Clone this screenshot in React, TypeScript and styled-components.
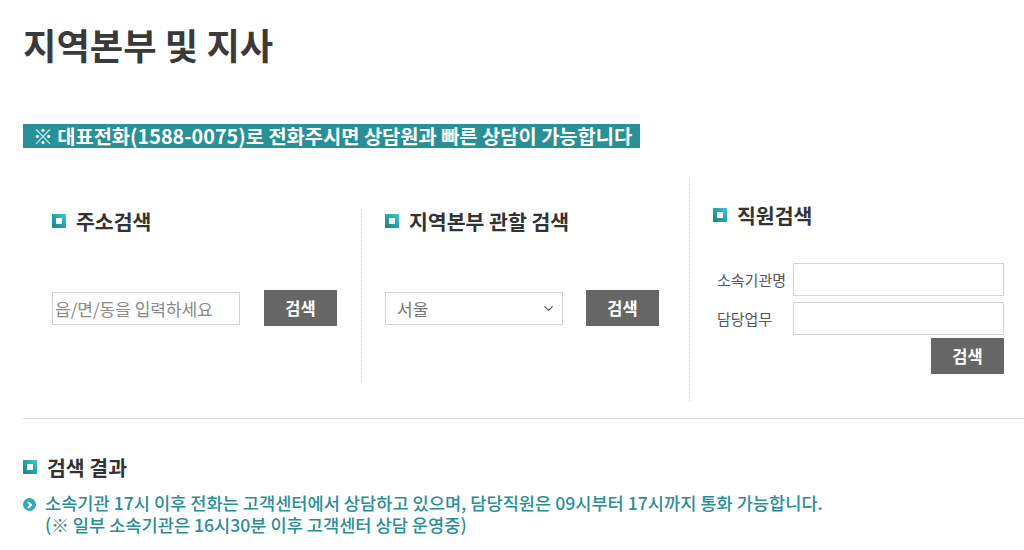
import React from "react";
import styled, { createGlobalStyle } from "styled-components";
import { ChevronDown } from "lucide-react";

const GlobalStyle = createGlobalStyle`
  html, body { margin: 0; padding: 0; background: #fff; }
  body { font-family: "Noto Sans CJK KR", "Noto Sans", sans-serif; color: #333; }
  * { box-sizing: border-box; }
`;

const Page = styled.div`
  padding-left: 23px;
  width: 1024px;
  height: 550px;
  overflow: hidden;
`;

const Title = styled.h1`
  margin: 21px 0 0 0;
  font-size: 36.3px;
  line-height: 46px;
  font-weight: 700;
  color: #3a3a3a;
`;

const Banner = styled.div`
  display: inline-block;
  margin-top: 57px;
  height: 24px;
  line-height: 24px;
  padding: 0 8px 0 10px;
  background: #2a9097;
  color: #fff;
  font-size: 19.8px;
  font-weight: 700;
  white-space: nowrap;
`;

const Columns = styled.div`
  display: grid;
  grid-template-columns: 339px 328px 1fr;
  align-items: start;
  margin-top: 30px;
`;

const Column = styled.div<{ $top: number; $height?: number; $padLeft: number; $divider?: boolean }>`
  margin-top: ${(p) => p.$top}px;
  ${(p) => (p.$height ? `height: ${p.$height}px;` : "")}
  padding-left: ${(p) => p.$padLeft}px;
  border-right: ${(p) => (p.$divider ? "1px dotted #cfcfcf" : "none")};
`;

const Heading = styled.div<{ $pt?: number }>`
  display: flex;
  align-items: center;
  gap: 10px;
  padding-top: ${(p) => p.$pt ?? 0}px;
  height: ${(p) => 24 + (p.$pt ?? 0)}px;
  font-size: 20.5px;
  font-weight: 700;
  color: #333;
  white-space: nowrap;
`;

const SquareIcon = styled.span`
  position: relative;
  flex: none;
  width: 14px;
  height: 14px;
  background: linear-gradient(45deg, #1b8189 0%, #29a6ae 55%, #47c8cf 100%);
  &::after {
    content: "";
    position: absolute;
    left: 4px;
    top: 4px;
    width: 6px;
    height: 6px;
    background: #fff;
  }
`;

const SearchRow = styled.div<{ $mt: number }>`
  display: flex;
  align-items: center;
  margin-top: ${(p) => p.$mt}px;
`;

const TextInput = styled.input<{ $w: number }>`
  width: ${(p) => p.$w}px;
  height: 33px;
  border: 1px solid #d4d4d4;
  padding: 0 2px;
  font-family: inherit;
  font-size: 17px;
  color: #555;
  outline: none;
  &::placeholder { color: #8a8a8a; }
`;

const SelectWrap = styled.div`
  position: relative;
  width: 178px;
  height: 33px;
`;

const Select = styled.select`
  appearance: none;
  width: 100%;
  height: 100%;
  border: 1px solid #d4d4d4;
  background: #fff;
  padding: 0 11px;
  font-family: inherit;
  font-size: 17px;
  color: #777;
  outline: none;
`;

const SelectArrow = styled.span`
  position: absolute;
  right: 7px;
  top: 9px;
  color: #555;
  pointer-events: none;
  display: flex;
`;

const Button = styled.button<{ $ml?: number }>`
  margin-left: ${(p) => p.$ml ?? 0}px;
  width: 73px;
  height: 36px;
  border: none;
  background: #666;
  color: #fff;
  font-family: inherit;
  font-size: 16.5px;
  font-weight: 700;
  cursor: pointer;
`;

const FormGrid = styled.div`
  display: grid;
  grid-template-columns: 76px 211px;
  row-gap: 6px;
  align-items: center;
  margin-top: 36px;
  padding-left: 4px;
`;

const Label = styled.label`
  font-size: 15px;
  color: #555;
  white-space: nowrap;
`;

const RightButtonRow = styled.div`
  display: flex;
  justify-content: flex-end;
  width: 291px;
  margin-top: 3px;
`;

const Rule = styled.hr`
  margin: 0;
  border: none;
  border-top: 1px solid #dcdcdc;
  margin-top: 17px;
`;

const ResultSection = styled.section`
  padding-top: 36px;
`;

const Notice = styled.div`
  display: flex;
  align-items: flex-start;
  gap: 9px;
  margin-top: 13px;
  color: #2a8e97;
  font-size: 17.6px;
  font-weight: 500;
  white-space: nowrap;
`;

const NoticeLine = styled.div`
  height: 22px;
  line-height: 22px;
`;

const Bullet = styled.span`
  flex: none;
  width: 13px;
  height: 13px;
  margin-top: 6px;
  border-radius: 50%;
  background: #31aab8;
  display: flex;
  align-items: center;
  justify-content: center;
`;

export default function App() {
  return (
    <>
      <GlobalStyle />
      <Page>
        <Title>지역본부 및 지사</Title>
        <Banner>※ 대표전화(1588-0075)로 전화주시면 상담원과 빠른 상담이 가능합니다</Banner>
        <Columns>
          <Column $top={30} $height={174} $padLeft={29} $divider>
            <Heading>
              <SquareIcon />
              주소검색
            </Heading>
            <SearchRow $mt={57}>
              <TextInput $w={188} placeholder="읍/면/동을 입력하세요" />
              <Button $ml={24}>검색</Button>
            </SearchRow>
          </Column>
          <Column $top={0} $height={222} $padLeft={23} $divider>
            <Heading $pt={30}>
              <SquareIcon />
              지역본부 관할 검색
            </Heading>
            <SearchRow $mt={57}>
              <SelectWrap>
                <Select defaultValue="서울">
                  <option>서울</option>
                  <option>경기</option>
                  <option>부산</option>
                </Select>
                <SelectArrow>
                  <ChevronDown size={15} strokeWidth={2} />
                </SelectArrow>
              </SelectWrap>
              <Button $ml={23}>검색</Button>
            </SearchRow>
          </Column>
          <Column $top={0} $padLeft={23}>
            <Heading $pt={24}>
              <SquareIcon />
              직원검색
            </Heading>
            <FormGrid>
              <Label>소속기관명</Label>
              <TextInput $w={211} />
              <Label>담당업무</Label>
              <TextInput $w={211} />
            </FormGrid>
            <RightButtonRow>
              <Button>검색</Button>
            </RightButtonRow>
          </Column>
        </Columns>
        <Rule />
        <ResultSection>
          <Heading>
            <SquareIcon />
            검색 결과
          </Heading>
          <Notice>
            <Bullet>
              <svg width="7" height="8" viewBox="0 0 7 8">
                <path d="M2 1 L5 4 L2 7" fill="none" stroke="#fff" strokeWidth="2" />
              </svg>
            </Bullet>
            <div>
              <NoticeLine>
                소속기관 17시 이후 전화는 고객센터에서 상담하고 있으며, 담당직원은 09시부터 17시까지 통화 가능합니다.
              </NoticeLine>
              <NoticeLine>(※ 일부 소속기관은 16시30분 이후 고객센터 상담 운영중)</NoticeLine>
            </div>
          </Notice>
        </ResultSection>
      </Page>
    </>
  );
}
